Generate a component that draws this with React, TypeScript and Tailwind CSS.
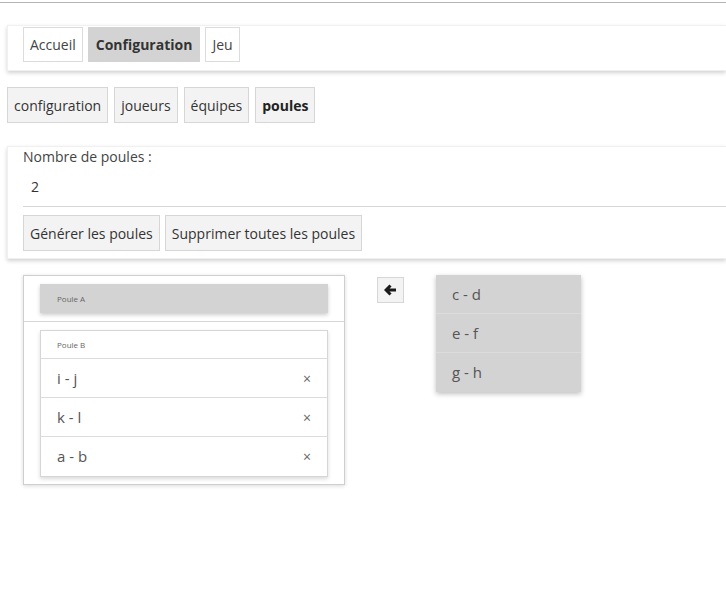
const font = { fontFamily: '"Open Sans", "Liberation Sans", sans-serif' };

const NavButton: React.FC<{ label: string; active?: boolean }> = ({ label, active }) => (
  <button
    className={
      active
        ? "h-[35px] px-[7px] bg-[#d3d3d3] border border-[#d3d3d3] font-bold text-[#333] text-[14px]"
        : "h-[35px] px-[6px] bg-white border border-[#dcdcdc] text-[#444] text-[14px]"
    }
  >
    {label}
  </button>
);

const TabButton: React.FC<{ label: string; active?: boolean }> = ({ label, active }) => (
  <button
    className={
      "h-[36px] px-[6px] bg-[#f3f3f3] border border-[#d6d6d6] text-[14px] " +
      (active ? "font-bold text-[#222]" : "text-[#333]")
    }
  >
    {label}
  </button>
);

const Row: React.FC<{ label: string; remove?: boolean; last?: boolean }> = ({ label, remove, last }) => (
  <div
    className={
      "flex items-center justify-between h-[39px] pl-[16px] pr-[16px] text-[15px] text-[#555] " +
      (last ? "" : "border-b border-[#dcdcdc]")
    }
  >
    <span>{label}</span>
    {remove && <span className="text-[14px] text-[#666]">×</span>}
  </div>
);

export default function App() {
  return (
    <div className="w-[726px] h-[608px] overflow-hidden bg-white" style={font}>
      {/* top rule */}
      <div className="mt-[2px] h-px bg-[#b4b4b4]" />

      {/* main nav */}
      <div className="mt-[22px] ml-[7px] h-[46px] flex items-start gap-[5px] pl-[15px] pt-[1px] bg-white border border-[#f0f0f0] border-r-0 shadow-[0_2px_4px_rgba(0,0,0,0.18)]">
        <NavButton label="Accueil" />
        <NavButton label="Configuration" active />
        <NavButton label="Jeu" />
      </div>

      {/* sub tabs */}
      <div className="mt-[16px] ml-[7px] flex gap-[6px]">
        <TabButton label="configuration" />
        <TabButton label="joueurs" />
        <TabButton label="équipes" />
        <TabButton label="poules" active />
      </div>

      {/* config form */}
      <div className="mt-[23px] ml-[7px] h-[113px] pl-[15px] bg-white border border-[#f0f0f0] border-r-0 shadow-[0_2px_4px_rgba(0,0,0,0.18)]">
        <div className="text-[14px] text-[#444] leading-[20px]">Nombre de poules :</div>
        <div className="h-[40px] pl-[8px] flex items-center text-[14px] text-[#333] border-b border-[#d6d6d6]">2</div>
        <div className="mt-[8px] flex gap-[5px]">
          <button className="h-[36px] px-[6px] bg-[#f3f3f3] border border-[#d6d6d6] text-[14px] text-[#333]">
            Générer les poules
          </button>
          <button className="h-[36px] px-[6px] bg-[#f3f3f3] border border-[#d6d6d6] text-[14px] text-[#333]">
            Supprimer toutes les poules
          </button>
        </div>
      </div>

      {/* poules area */}
      <div className="mt-[16px] flex items-start">
        <div className="ml-[23px] w-[322px] bg-white border border-[#cfcfcf] shadow-[0_1px_4px_rgba(0,0,0,0.15)]">
          <div className="px-[16px] pt-[8px] pb-[8px] border-b border-[#d6d6d6]">
            <div className="h-[29px] pl-[17px] flex items-center bg-[#d3d3d3] text-[8px] text-[#666] shadow-[0_2px_4px_rgba(0,0,0,0.2)]">
              Poule A
            </div>
          </div>
          <div className="px-[16px] pt-[8px] pb-[7px]">
            <div className="bg-white border border-[#d6d6d6] shadow-[0_2px_4px_rgba(0,0,0,0.15)]">
              <div className="h-[28px] pl-[16px] flex items-center text-[8px] text-[#666] border-b border-[#dcdcdc]">
                Poule B
              </div>
              <Row label="i - j" remove />
              <Row label="k - l" remove />
              <Row label="a - b" remove last />
            </div>
          </div>
        </div>

        <button className="ml-[32px] mt-[2px] w-[27px] h-[26px] flex items-center justify-center bg-[#f3f3f3] border border-[#d6d6d6]">
          <svg width="13" height="12" viewBox="0 0 13 12" fill="none">
            <path
              d="M6.5 1.5 2 6l4.5 4.5M2.5 6H12"
              stroke="#1a1a1a"
              strokeWidth="3"
              strokeLinejoin="miter"
            />
          </svg>
        </button>

        <div className="ml-[32px] w-[145px] bg-[#d3d3d3] shadow-[0_2px_5px_rgba(0,0,0,0.25)]">
          <Row label="c - d" />
          <Row label="e - f" />
          <Row label="g - h" last />
        </div>
      </div>
    </div>
  );
}
